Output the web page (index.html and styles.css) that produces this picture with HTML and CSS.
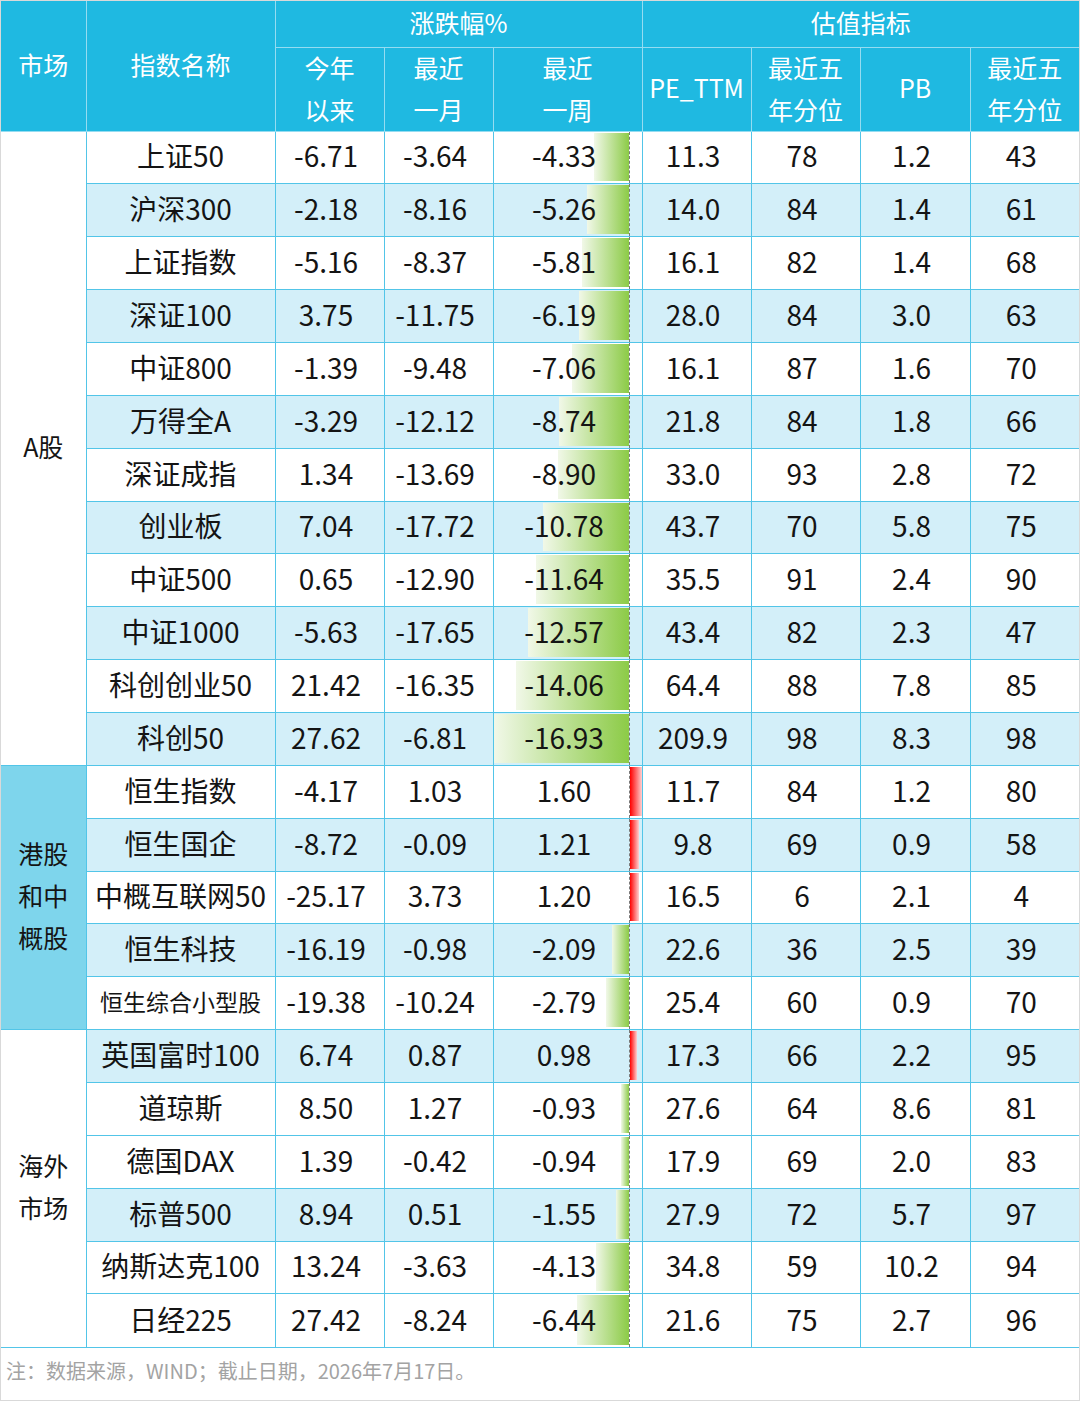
FILE: index.html
```html
<!DOCTYPE html>
<html lang="zh-CN">
<head>
<meta charset="utf-8">
<title>指数涨跌幅与估值</title>
<link rel="stylesheet" href="styles.css">
</head>
<body>
<div class="page">
  <div class="tablewrap">
  <table>
    <colgroup>
      <col class="c-mkt"><col class="c-name"><col class="c-n"><col class="c-n"><col class="c-wk"><col class="c-n"><col class="c-n"><col class="c-pb"><col class="c-n">
    </colgroup>
    <thead>
      <tr class="h1">
        <th rowspan="2">市场</th>
        <th rowspan="2">指数名称</th>
        <th colspan="3">涨跌幅%</th>
        <th colspan="4">估值指标</th>
      </tr>
      <tr class="h2">
        <th class="two"><div>今年<br>以来</div></th>
        <th class="two"><div>最近<br>一月</div></th>
        <th class="two"><div>最近<br>一周</div></th>
        <th>PE_TTM</th>
        <th class="two"><div>最近五<br>年分位</div></th>
        <th>PB</th>
        <th class="two"><div>最近五<br>年分位</div></th>
      </tr>
    </thead>
    <tbody>
      <tr><td class="mkt" rowspan="12">A股</td><td class="nm">上证50</td><td>-6.71</td><td>-3.64</td><td class="wk"><i class="axis"></i><b class="neg" style="width:34.5px"></b><span>-4.33</span></td><td>11.3</td><td>78</td><td>1.2</td><td>43</td></tr>
      <tr class="b"><td class="nm">沪深300</td><td>-2.18</td><td>-8.16</td><td class="wk"><i class="axis"></i><b class="neg" style="width:41.9px"></b><span>-5.26</span></td><td>14.0</td><td>84</td><td>1.4</td><td>61</td></tr>
      <tr><td class="nm">上证指数</td><td>-5.16</td><td>-8.37</td><td class="wk"><i class="axis"></i><b class="neg" style="width:46.3px"></b><span>-5.81</span></td><td>16.1</td><td>82</td><td>1.4</td><td>68</td></tr>
      <tr class="b"><td class="nm">深证100</td><td>3.75</td><td>-11.75</td><td class="wk"><i class="axis"></i><b class="neg" style="width:49.4px"></b><span>-6.19</span></td><td>28.0</td><td>84</td><td>3.0</td><td>63</td></tr>
      <tr><td class="nm">中证800</td><td>-1.39</td><td>-9.48</td><td class="wk"><i class="axis"></i><b class="neg" style="width:56.3px"></b><span>-7.06</span></td><td>16.1</td><td>87</td><td>1.6</td><td>70</td></tr>
      <tr class="b"><td class="nm">万得全A</td><td>-3.29</td><td>-12.12</td><td class="wk"><i class="axis"></i><b class="neg" style="width:69.7px"></b><span>-8.74</span></td><td>21.8</td><td>84</td><td>1.8</td><td>66</td></tr>
      <tr><td class="nm">深证成指</td><td>1.34</td><td>-13.69</td><td class="wk"><i class="axis"></i><b class="neg" style="width:71px"></b><span>-8.90</span></td><td>33.0</td><td>93</td><td>2.8</td><td>72</td></tr>
      <tr class="b"><td class="nm">创业板</td><td>7.04</td><td>-17.72</td><td class="wk"><i class="axis"></i><b class="neg" style="width:86px"></b><span>-10.78</span></td><td>43.7</td><td>70</td><td>5.8</td><td>75</td></tr>
      <tr><td class="nm">中证500</td><td>0.65</td><td>-12.90</td><td class="wk"><i class="axis"></i><b class="neg" style="width:92.8px"></b><span>-11.64</span></td><td>35.5</td><td>91</td><td>2.4</td><td>90</td></tr>
      <tr class="b"><td class="nm">中证1000</td><td>-5.63</td><td>-17.65</td><td class="wk"><i class="axis"></i><b class="neg" style="width:100.2px"></b><span>-12.57</span></td><td>43.4</td><td>82</td><td>2.3</td><td>47</td></tr>
      <tr><td class="nm">科创创业50</td><td>21.42</td><td>-16.35</td><td class="wk"><i class="axis"></i><b class="neg" style="width:112.1px"></b><span>-14.06</span></td><td>64.4</td><td>88</td><td>7.8</td><td>85</td></tr>
      <tr class="b"><td class="nm">科创50</td><td>27.62</td><td>-6.81</td><td class="wk"><i class="axis"></i><b class="neg" style="width:135px"></b><span>-16.93</span></td><td>209.9</td><td>98</td><td>8.3</td><td>98</td></tr>

      <tr><td class="mkt hk" rowspan="5">港股<br>和中<br>概股</td><td class="nm">恒生指数</td><td>-4.17</td><td>1.03</td><td class="wk"><i class="axis"></i><b class="pos" style="width:12.8px"></b><span>1.60</span></td><td>11.7</td><td>84</td><td>1.2</td><td>80</td></tr>
      <tr class="b"><td class="nm">恒生国企</td><td>-8.72</td><td>-0.09</td><td class="wk"><i class="axis"></i><b class="pos" style="width:9.6px"></b><span>1.21</span></td><td>9.8</td><td>69</td><td>0.9</td><td>58</td></tr>
      <tr><td class="nm">中概互联网50</td><td>-25.17</td><td>3.73</td><td class="wk"><i class="axis"></i><b class="pos" style="width:9.6px"></b><span>1.20</span></td><td>16.5</td><td>6</td><td>2.1</td><td>4</td></tr>
      <tr class="b"><td class="nm">恒生科技</td><td>-16.19</td><td>-0.98</td><td class="wk"><i class="axis"></i><b class="neg" style="width:16.7px"></b><span>-2.09</span></td><td>22.6</td><td>36</td><td>2.5</td><td>39</td></tr>
      <tr><td class="nm sm">恒生综合小型股</td><td>-19.38</td><td>-10.24</td><td class="wk"><i class="axis"></i><b class="neg" style="width:22.2px"></b><span>-2.79</span></td><td>25.4</td><td>60</td><td>0.9</td><td>70</td></tr>

      <tr class="b"><td class="mkt" rowspan="6">海外<br>市场</td><td class="nm">英国富时100</td><td>6.74</td><td>0.87</td><td class="wk"><i class="axis"></i><b class="pos" style="width:7.8px"></b><span>0.98</span></td><td>17.3</td><td>66</td><td>2.2</td><td>95</td></tr>
      <tr><td class="nm">道琼斯</td><td>8.50</td><td>1.27</td><td class="wk"><i class="axis"></i><b class="neg" style="width:7.4px"></b><span>-0.93</span></td><td>27.6</td><td>64</td><td>8.6</td><td>81</td></tr>
      <tr><td class="nm">德国DAX</td><td>1.39</td><td>-0.42</td><td class="wk"><i class="axis"></i><b class="neg" style="width:7.5px"></b><span>-0.94</span></td><td>17.9</td><td>69</td><td>2.0</td><td>83</td></tr>
      <tr class="b"><td class="nm">标普500</td><td>8.94</td><td>0.51</td><td class="wk"><i class="axis"></i><b class="neg" style="width:12.4px"></b><span>-1.55</span></td><td>27.9</td><td>72</td><td>5.7</td><td>97</td></tr>
      <tr><td class="nm">纳斯达克100</td><td>13.24</td><td>-3.63</td><td class="wk"><i class="axis"></i><b class="neg" style="width:32.9px"></b><span>-4.13</span></td><td>34.8</td><td>59</td><td>10.2</td><td>94</td></tr>
      <tr><td class="nm">日经225</td><td>27.42</td><td>-8.24</td><td class="wk"><i class="axis"></i><b class="neg" style="width:51.4px"></b><span>-6.44</span></td><td>21.6</td><td>75</td><td>2.7</td><td>96</td></tr>
    </tbody>
  </table>
  </div>
  <div class="note">注：数据来源，WIND；截止日期，2026年7月17日。</div>
</div>
</body>
</html>
```

FILE: styles.css
```css
html, body {
  margin: 0;
  padding: 0;
  background: #ffffff;
}
body {
  font-family: "Noto Sans CJK SC", "Noto Sans", sans-serif;
}
.page {
  width: 1080px;
  height: 1401px;
  box-sizing: border-box;
  border: 1px solid #d9d9d9;
  overflow: hidden;
}
.tablewrap {
  border-bottom: 1px solid #52c5e8;
}
table {
  border-collapse: collapse;
  border-style: hidden;
  table-layout: fixed;
  width: 1078px;
}
col.c-mkt { width: 85px; }
col.c-name { width: 189px; }
col.c-n { width: 109px; }
col.c-wk { width: 149px; }
col.c-pb { width: 110px; }

th, td {
  border: 1px solid #52c5e8;
  text-align: center;
  vertical-align: middle;
  white-space: nowrap;
}
th {
  background: #1fb9e1;
  color: #ffffff;
  font-weight: normal;
  font-size: 25px;
  line-height: 36px;
  padding: 0 0 4px 0;
  border-color: #95dcf1;
}
th.two {
  padding: 0;
  line-height: 42px;
}
th.two div {
  margin-top: -2px;
}
tr.h1 { height: 46px; }
tr.h2 { height: 84px; }
tbody tr { height: 52.87px; }
td {
  font-size: 28px;
  line-height: 32px;
  color: #141414;
  background: transparent;
  padding: 0 7px 4px 0;
}
td.nm { padding-right: 0; }
tr.b { background: #d3eff9; }
td.mkt {
  background: #ffffff;
  font-size: 25px;
  line-height: 42px;
  padding-right: 0;
}
td.mkt.hk { background: #7ed5ec; }
td.sm { font-size: 23px; }

td.wk { position: relative; }
td.wk span {
  position: relative;
  z-index: 2;
}
.axis {
  position: absolute;
  top: 0;
  bottom: 0;
  left: 135px;
  border-left: 1px dashed #7a7a7a;
  z-index: 1;
}
.neg, .pos {
  position: absolute;
  top: 1px;
  bottom: 2px;
  display: block;
}
.neg {
  right: calc(100% - 135px);
  background: linear-gradient(to right, #f1f8e8, #8ccb47);
}
.pos {
  left: 136px;
  background: linear-gradient(to right, #ff0000, #ffd0d0);
}
.note {
  height: 52px;
  box-sizing: border-box;
  display: flex;
  align-items: center;
  padding: 0 0 6px 5px;
  font-size: 20px;
  color: #a3a3a3;
}
```
